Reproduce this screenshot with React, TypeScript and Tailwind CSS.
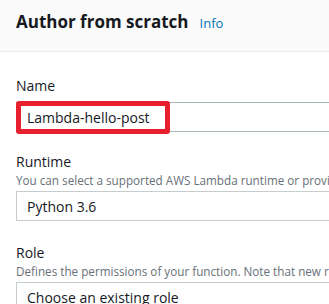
export default function App() {
  return (
    <div className="h-[304px] w-[329px] overflow-hidden bg-white font-['Open_Sans',sans-serif] text-[#16191f]">
      <header className="flex h-[52px] items-baseline gap-[11px] border-b border-[#eaeded] bg-[#fafafa] pl-4 pt-[10px]">
        <h2 className="whitespace-nowrap text-[17px] font-bold leading-[24px]">Author from scratch</h2>
        <a className="text-[13px] text-[#0073bb]">Info</a>
      </header>
      <div className="flex w-[560px] flex-col pl-4 pt-[24px]">
        <div className="flex flex-col">
          <label className="text-[14px] leading-[20px]">Name</label>
          <div className="relative mt-[6px]">
            <div className="flex h-[30px] items-center border border-[#aab7b8] pl-[10px] text-[14px]">
              Lambda-hello-post
            </div>
            <div className="absolute left-0 top-[-1px] h-[33px] w-[154px] rounded-[3px] border-[5px] border-[#e8202e]" />
          </div>
        </div>
        <div className="mt-[20px] flex flex-col">
          <label className="text-[14px] leading-[20px]">Runtime</label>
          <p className="whitespace-nowrap text-[11.7px] leading-[16px] text-[#687078]">
            You can select a supported AWS Lambda runtime or provide your own.
          </p>
          <div className="mt-[3px] flex h-[30px] items-center border border-[#c6cdce] pl-[10px] text-[14px]">
            Python 3.6
          </div>
        </div>
        <div className="mt-[22px] flex flex-col">
          <label className="text-[14px] leading-[20px]">Role</label>
          <p className="whitespace-nowrap text-[11.7px] leading-[16px] text-[#687078]">
            Defines the permissions of your function. Note that new roles may not be available for a few minutes.
          </p>
          <div className="mt-[3px] flex h-[30px] items-center border border-[#c6cdce] pl-[10px] text-[14px]">
            Choose an existing role
          </div>
        </div>
      </div>
    </div>
  );
}
